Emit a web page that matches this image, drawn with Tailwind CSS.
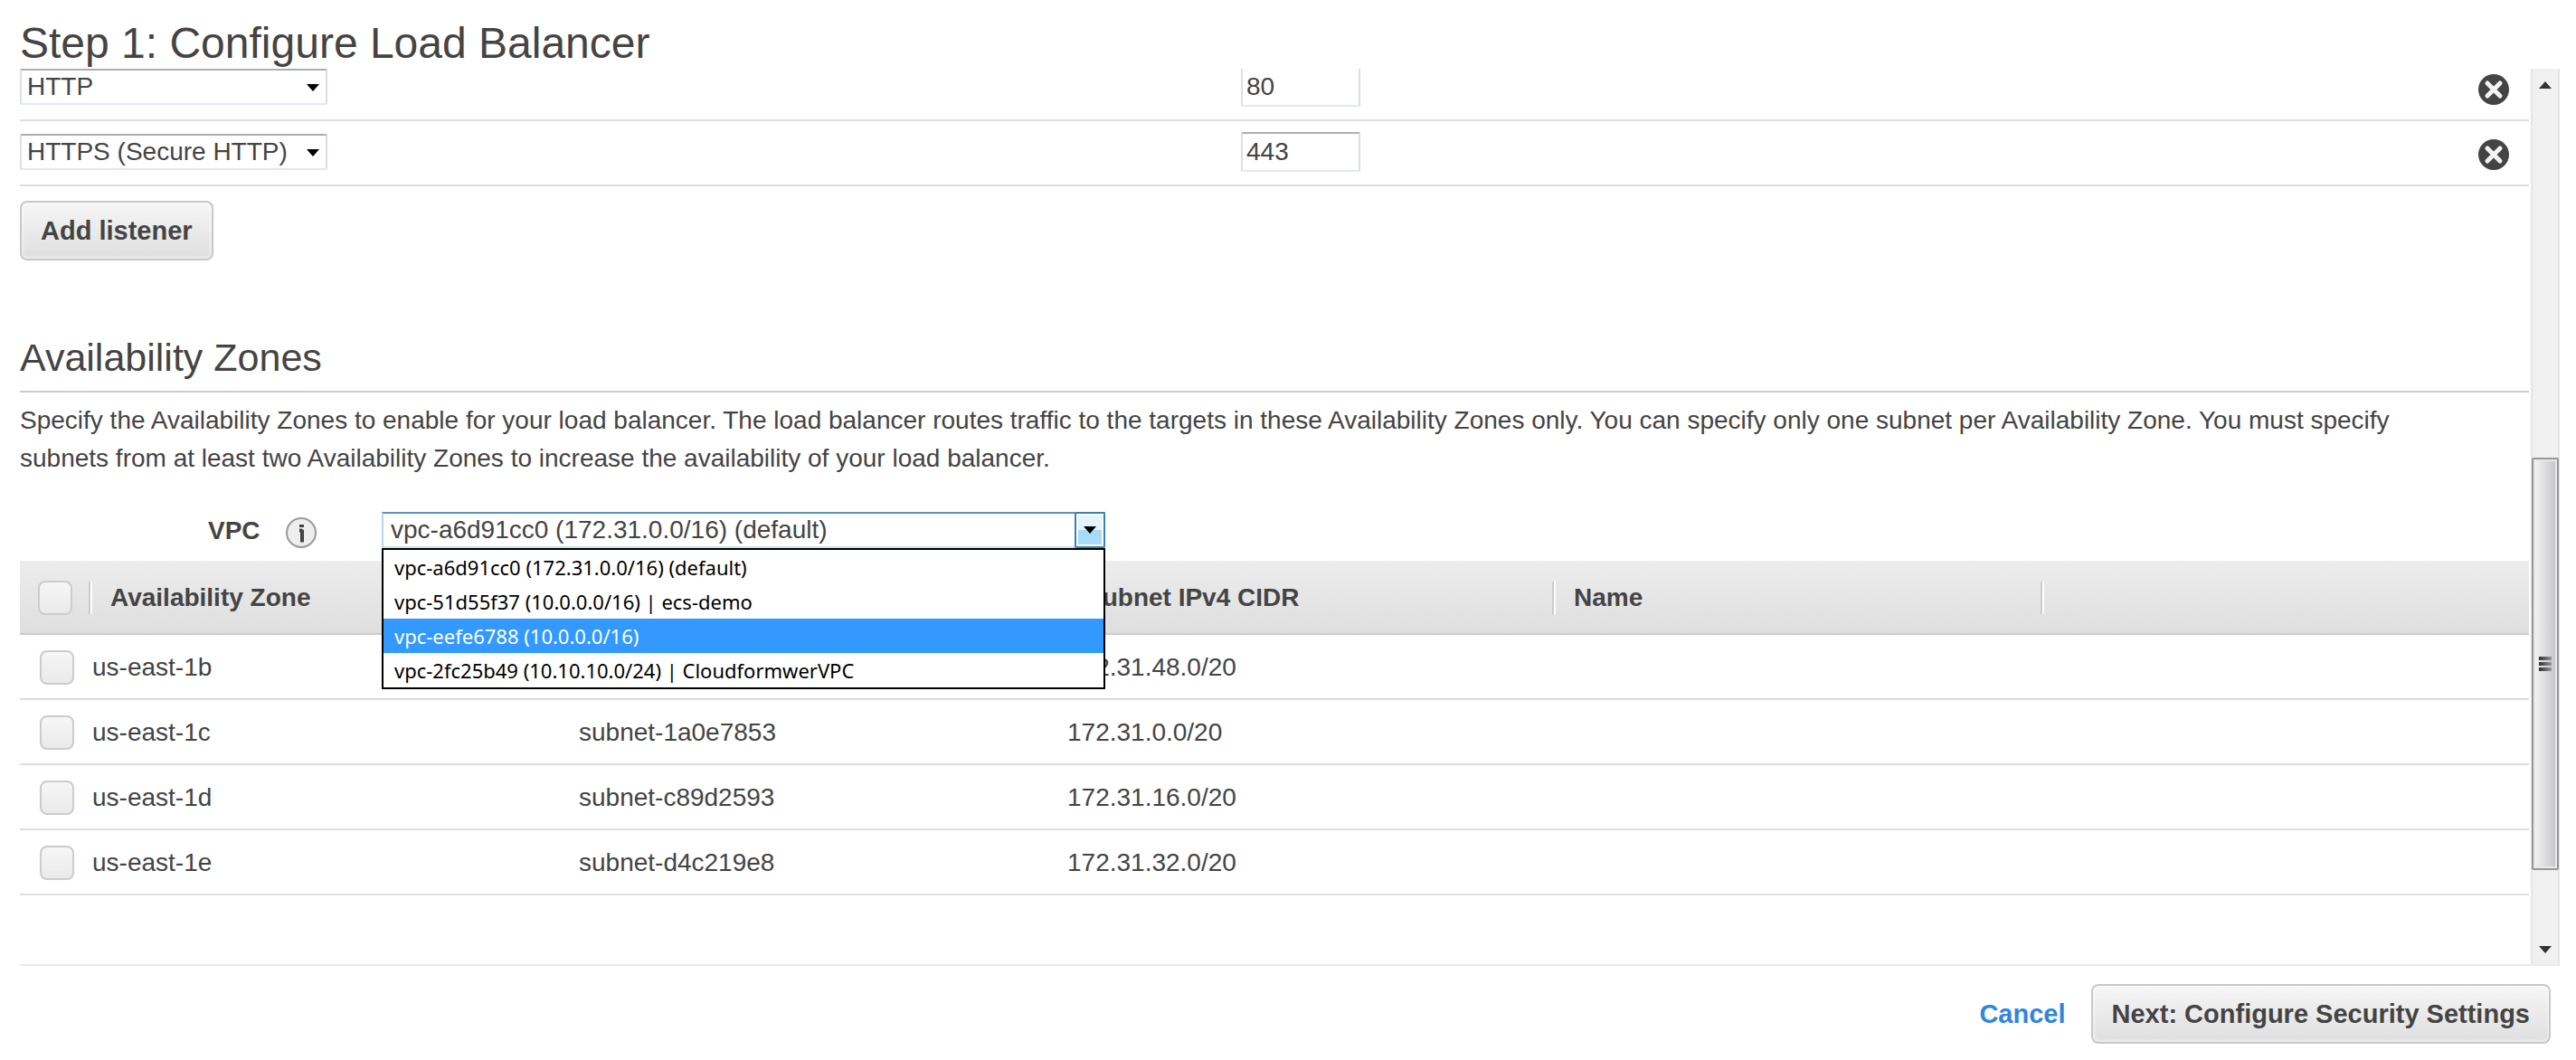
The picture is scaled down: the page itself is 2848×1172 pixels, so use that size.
<!DOCTYPE html>
<html lang="en">
<head>
<meta charset="utf-8">
<title>Step 1: Configure Load Balancer</title>
<script src="https://cdn.jsdelivr.net/npm/@tailwindcss/browser@4"></script>
</head>
<body class="bg-white font-['Liberation_Sans',Arial,sans-serif] text-[28px] leading-[42px] text-[#444]">
<div class="flex flex-col pl-[22px] pr-[18px] pt-5">
  <h1 class="h-14 text-[48px] leading-[56px]">Step 1: Configure Load Balancer</h1>

  <div class="flex border-b-2 border-[#ebebeb]">
    <main class="h-[990px] min-w-0 flex-1 overflow-hidden pr-[2px]">
      <section aria-label="Listeners">
        <div class="-mt-3.5 flex h-[72px] items-center border-b-2 border-[#dedede] pb-0.5">
          <div class="flex w-[1350px] shrink-0">
            <div class="relative">
              <select aria-label="Protocol" class="h-10 w-[340px] appearance-none rounded-xs border-2 border-t-[#abadb3] border-x-[#dbdfe6] border-b-[#e3e9ef] bg-white pl-1.5 leading-9"><option>HTTP</option><option>HTTPS (Secure HTTP)</option></select>
              <svg class="pointer-events-none absolute right-2 top-4.5 h-2 w-4" viewBox="0 0 16 8" aria-hidden="true"><path d="M1 0h14L8 8z" fill="#000"/></svg>
            </div>
          </div>
          <input aria-label="Port" value="80" class="h-11 w-[132px] rounded-xs border-2 border-t-[#abadb3] border-x-[#dbdfe6] border-b-[#e3e9ef] pl-1">
          <button aria-label="Remove listener" class="ml-auto mr-[22px] mt-1.5 size-[34px]">
            <svg viewBox="0 0 34 34" aria-hidden="true"><circle cx="17" cy="17" r="17" fill="#444"/><path d="M10 10l14 14m0-14l-14 14" stroke="#f4f4f4" stroke-width="5" stroke-linecap="round"/></svg>
          </button>
        </div>
        <div class="flex h-[72px] items-center border-b-2 border-[#dedede] pb-0.5">
          <div class="flex w-[1350px] shrink-0">
            <div class="relative">
              <select aria-label="Protocol" class="h-10 w-[340px] appearance-none rounded-xs border-2 border-t-[#abadb3] border-x-[#dbdfe6] border-b-[#e3e9ef] bg-white pl-1.5 leading-9"><option>HTTPS (Secure HTTP)</option><option>HTTP</option></select>
              <svg class="pointer-events-none absolute right-2 top-4.5 h-2 w-4" viewBox="0 0 16 8" aria-hidden="true"><path d="M1 0h14L8 8z" fill="#000"/></svg>
            </div>
          </div>
          <input aria-label="Port" value="443" class="h-11 w-[132px] rounded-xs border-2 border-t-[#abadb3] border-x-[#dbdfe6] border-b-[#e3e9ef] pl-1">
          <button aria-label="Remove listener" class="ml-auto mr-[22px] mt-1.5 size-[34px]">
            <svg viewBox="0 0 34 34" aria-hidden="true"><circle cx="17" cy="17" r="17" fill="#444"/><path d="M10 10l14 14m0-14l-14 14" stroke="#f4f4f4" stroke-width="5" stroke-linecap="round"/></svg>
          </button>
        </div>
        <button class="mt-4 flex h-[66px] items-center rounded-lg border-2 border-[#c8c8c8] bg-linear-to-b from-[#f6f6f6] to-[#dfdfdf] px-[21px] text-[29px] font-bold shadow-[inset_0_0_4px_#fff]">Add listener</button>
      </section>

      <section aria-labelledby="zones">
        <h2 id="zones" class="mt-20 h-[66px] border-b-2 border-[#ccc] text-[43px] leading-[54px]">Availability Zones</h2>
        <p class="mt-2.5 pr-16">Specify the Availability Zones to enable for your load balancer. The load balancer routes traffic to the targets in these Availability Zones only. You can specify only one subnet per Availability Zone. You must specify subnets from at least two Availability Zones to increase the availability of your load balancer.</p>

        <div class="mt-[38px] flex h-[54px] items-start">
          <div class="flex w-[400px] shrink-0 items-center gap-7 pl-52">
            <label for="vpc" class="font-bold">VPC</label>
            <button aria-label="About VPC" class="mt-1 size-[34px]">
              <svg viewBox="0 0 34 34" aria-hidden="true"><circle cx="17" cy="17" r="16" fill="#eee" stroke="#999" stroke-width="2"/><path d="M17.500 8v3" stroke="#444" stroke-width="5"/><path d="M15 14.500h3m0-1v14" fill="none" stroke="#444" stroke-width="4"/></svg>
            </button>
          </div>
          <div class="relative w-[800px]">
            <select id="vpc" class="block h-10 w-full appearance-none border-2 border-t-[#5794bf] border-x-[#b7d5ea] border-b-[#c7e2f1] bg-white pl-2 leading-9"><option>vpc-a6d91cc0 (172.31.0.0/16) (default)</option></select>
            <div class="pointer-events-none absolute right-0 top-0 flex h-10 w-[34px] items-center justify-center rounded-xs border-2 border-[#3c7fb1] bg-linear-to-b from-[#e3f4fc] from-50% to-[#a8dbf6] to-50% shadow-[inset_0_0_0_2px_#fff]">
              <svg class="h-2 w-4" viewBox="0 0 16 8" aria-hidden="true"><path d="M1 0h14L8 8z" fill="#000"/></svg>
            </div>
            <ul role="listbox" aria-label="VPC" class="absolute left-0 top-10 z-10 w-full border-2 border-black bg-white font-['Noto_Sans',sans-serif] text-[22px] leading-[38px] text-black">
              <li role="option" class="pl-3">vpc-a6d91cc0 (172.31.0.0/16) (default)</li>
              <li role="option" class="pl-3">vpc-51d55f37 (10.0.0.0/16) | ecs-demo</li>
              <li role="option" aria-selected="true" class="bg-[#3399ff] pl-3 text-white">vpc-eefe6788 (10.0.0.0/16)</li>
              <li role="option" class="pl-3">vpc-2fc25b49 (10.10.10.0/24) | CloudformwerVPC</li>
            </ul>
          </div>
        </div>

        <table class="w-full table-fixed border-collapse text-left">
          <colgroup><col class="w-[76px]"><col class="w-[538px]"><col class="w-[540px]"><col class="w-[540px]"><col class="w-[540px]"><col></colgroup>
          <thead>
            <tr class="h-[82px] bg-linear-to-b from-[#ededed] to-[#dedede] shadow-[inset_0_-2px_0_#ccc]">
              <th class="pl-5"><input type="checkbox" aria-label="Select all" class="block size-[38px] appearance-none rounded-lg border-2 border-[#ccc] bg-linear-to-b from-[#f6f6f6] to-[#eaeaea]"></th>
              <th><div class="flex h-9 items-center border-l-2 border-[#ccc] pl-[22px] shadow-[inset_2px_0_0_#fff]">Availability Zone</div></th>
              <th aria-label="Subnet ID"><div class="h-9 border-l-2 border-[#ccc] shadow-[inset_2px_0_0_#fff]"></div></th>
              <th><div class="flex h-9 items-center border-l-2 border-[#ccc] pl-[22px] shadow-[inset_2px_0_0_#fff]">Subnet IPv4 CIDR</div></th>
              <th><div class="flex h-9 items-center border-l-2 border-[#ccc] pl-[22px] shadow-[inset_2px_0_0_#fff]">Name</div></th>
              <th><div class="h-9 border-l-2 border-[#ccc] shadow-[inset_2px_0_0_#fff]"></div></th>
            </tr>
          </thead>
          <tbody>
            <tr class="h-[72px] shadow-[inset_0_-2px_0_#dedede]">
              <td class="pl-[22px]"><input id="z1" type="checkbox" class="block size-[38px] appearance-none rounded-lg border-2 border-[#ccc] bg-linear-to-b from-[#f6f6f6] to-[#eaeaea]"></td>
              <td class="pl-1"><label for="z1">us-east-1b</label></td><td></td><td class="pl-1">172.31.48.0/20</td><td></td><td></td>
            </tr>
            <tr class="h-[72px] shadow-[inset_0_-2px_0_#dedede]">
              <td class="pl-[22px]"><input id="z2" type="checkbox" class="block size-[38px] appearance-none rounded-lg border-2 border-[#ccc] bg-linear-to-b from-[#f6f6f6] to-[#eaeaea]"></td>
              <td class="pl-1"><label for="z2">us-east-1c</label></td><td class="pl-1">subnet-1a0e7853</td><td class="pl-1">172.31.0.0/20</td><td></td><td></td>
            </tr>
            <tr class="h-[72px] shadow-[inset_0_-2px_0_#dedede]">
              <td class="pl-[22px]"><input id="z3" type="checkbox" class="block size-[38px] appearance-none rounded-lg border-2 border-[#ccc] bg-linear-to-b from-[#f6f6f6] to-[#eaeaea]"></td>
              <td class="pl-1"><label for="z3">us-east-1d</label></td><td class="pl-1">subnet-c89d2593</td><td class="pl-1">172.31.16.0/20</td><td></td><td></td>
            </tr>
            <tr class="h-[72px] shadow-[inset_0_-2px_0_#dedede]">
              <td class="pl-[22px]"><input id="z4" type="checkbox" class="block size-[38px] appearance-none rounded-lg border-2 border-[#ccc] bg-linear-to-b from-[#f6f6f6] to-[#eaeaea]"></td>
              <td class="pl-1"><label for="z4">us-east-1e</label></td><td class="pl-1">subnet-d4c219e8</td><td class="pl-1">172.31.32.0/20</td><td></td><td></td>
            </tr>
          </tbody>
        </table>
      </section>
    </main>

    <div class="flex w-8 shrink-0 flex-col items-center border-x-2 border-[#e6e6e6] bg-[#f0f0f0]" aria-hidden="true">
      <svg class="mt-3.5 h-2 w-3.5" viewBox="0 0 14 8"><path d="M7 0l7 8H0z" fill="#333"/></svg>
      <div class="mt-[408px] flex h-[456px] w-[30px] flex-col items-center justify-center gap-[2px] rounded-xs border-2 border-[#979797] bg-linear-to-r from-[#f6f6f6] via-[#dcdcdf] to-[#c4c4c8] shadow-[inset_0_0_0_2px_#e8e8e8]">
        <div class="h-1 w-3.5 bg-linear-to-r from-[#333] to-[#999]"></div>
        <div class="h-1 w-3.5 bg-linear-to-r from-[#333] to-[#999]"></div>
        <div class="h-1 w-3.5 bg-linear-to-r from-[#333] to-[#999]"></div>
      </div>
      <svg class="mb-3 mt-auto h-2 w-3.5" viewBox="0 0 14 8"><path d="M0 0h14L7 8z" fill="#333"/></svg>
    </div>
  </div>

  <footer class="flex items-center justify-end gap-7 pr-2.5 pt-5 text-[29px] font-bold">
    <a href="#" class="text-[#2e86de]">Cancel</a>
    <button class="flex h-[66px] items-center rounded-lg border-2 border-[#c8c8c8] bg-linear-to-b from-[#f6f6f6] to-[#dfdfdf] px-[21px] shadow-[inset_0_0_4px_#fff]">Next: Configure Security Settings</button>
  </footer>
</div>
</body>
</html>
